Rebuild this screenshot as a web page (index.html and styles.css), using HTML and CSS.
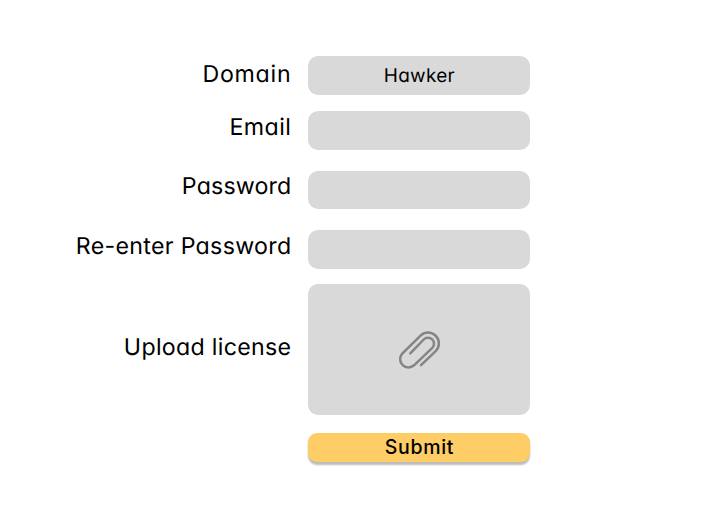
FILE: index.html
```
<!DOCTYPE html>
<html lang="en">
<head>
<meta charset="utf-8">
<title>Register</title>
<link rel="stylesheet" href="styles.css">
</head>
<body>
<form class="form">
  <div class="row row-domain"><label class="label"><span class="domain">Domain</span></label><div class="field"><span class="value">Hawker</span></div></div>
  <div class="row"><label class="label raised"><span class="email">Email</span></label><div class="field"></div></div>
  <div class="row"><label class="label raised"><span class="password">Password</span></label><div class="field"></div></div>
  <div class="row"><label class="label raised"><span class="repeat">Re-enter Password</span></label><div class="field"></div></div>
  <div class="row row-upload"><label class="label"><span class="upload">Upload license</span></label>
    <div class="field">
      <svg class="clip" viewBox="0 0 44 40"><path d="M24 36.1 38.7 22.1A10.8 10.8 0 0 0 23.3 6.8L5 24.9A8.3 8.3 0 0 0 17 36.3L35.3 18.9A6 6 0 0 0 26.7 10.5L13.3 24.3"/></svg>
    </div>
  </div>
  <button class="submit" type="button">Submit</button>
</form>
</body>
</html>
```
FILE: styles.css
```
* { box-sizing: border-box; }
body {
  margin: 0;
  background: #fff;
  color: #000;
  font-family: Inter, "Liberation Sans", sans-serif;
  font-feature-settings: "cv11";
  text-rendering: geometricPrecision;
}
.form {
  width: 530.4px;
  min-height: 510px;
  padding-top: 56px;
  display: flex;
  flex-direction: column;
}
.row {
  display: grid;
  grid-template-columns: 290.4px 222px;
  column-gap: 18px;
  height: 38.5px;
  margin-bottom: 21px;
}
.row-domain { margin-bottom: 16.5px; }
.row:nth-child(4) { margin-bottom: 15.5px; }
.row-upload { height: 130.5px; margin-bottom: 18px; }
.label {
  display: flex;
  align-items: center;
  justify-content: flex-end;
  padding-bottom: 2px;
  font-size: 23.2px;
  line-height: 30px;
  white-space: nowrap;
}
.label span { margin-right: -1px; }
.domain { letter-spacing: .75px; }
.email { letter-spacing: .45px; }
.password { letter-spacing: .15px; }
.repeat { letter-spacing: .3px; }
.upload { letter-spacing: .3px; }
.raised { padding-bottom: 7px; }
.row-upload .label { padding-bottom: 4px; }
.field {
  display: flex;
  align-items: center;
  justify-content: center;
  border-radius: 10px;
  background: #d9d9d9;
}
.value { font-size: 19px; line-height: 26px; letter-spacing: .3px; padding-top: 1px; }
.clip {
  width: 44px;
  height: 40px;
  fill: none;
  stroke: #858585;
  stroke-width: 2.5;
  stroke-linecap: round;
  stroke-linejoin: round;
}
.submit {
  align-self: flex-end;
  width: 222px;
  height: 29px;
  padding: 0 0 1px;
  border: 0;
  border-radius: 9px;
  background: #ffcd66;
  box-shadow: 0 3px 2px rgba(0, 0, 0, .27);
  color: #000;
  font: 500 19.5px/26px Inter, "Liberation Sans", sans-serif;
  letter-spacing: .7px;
}
```
